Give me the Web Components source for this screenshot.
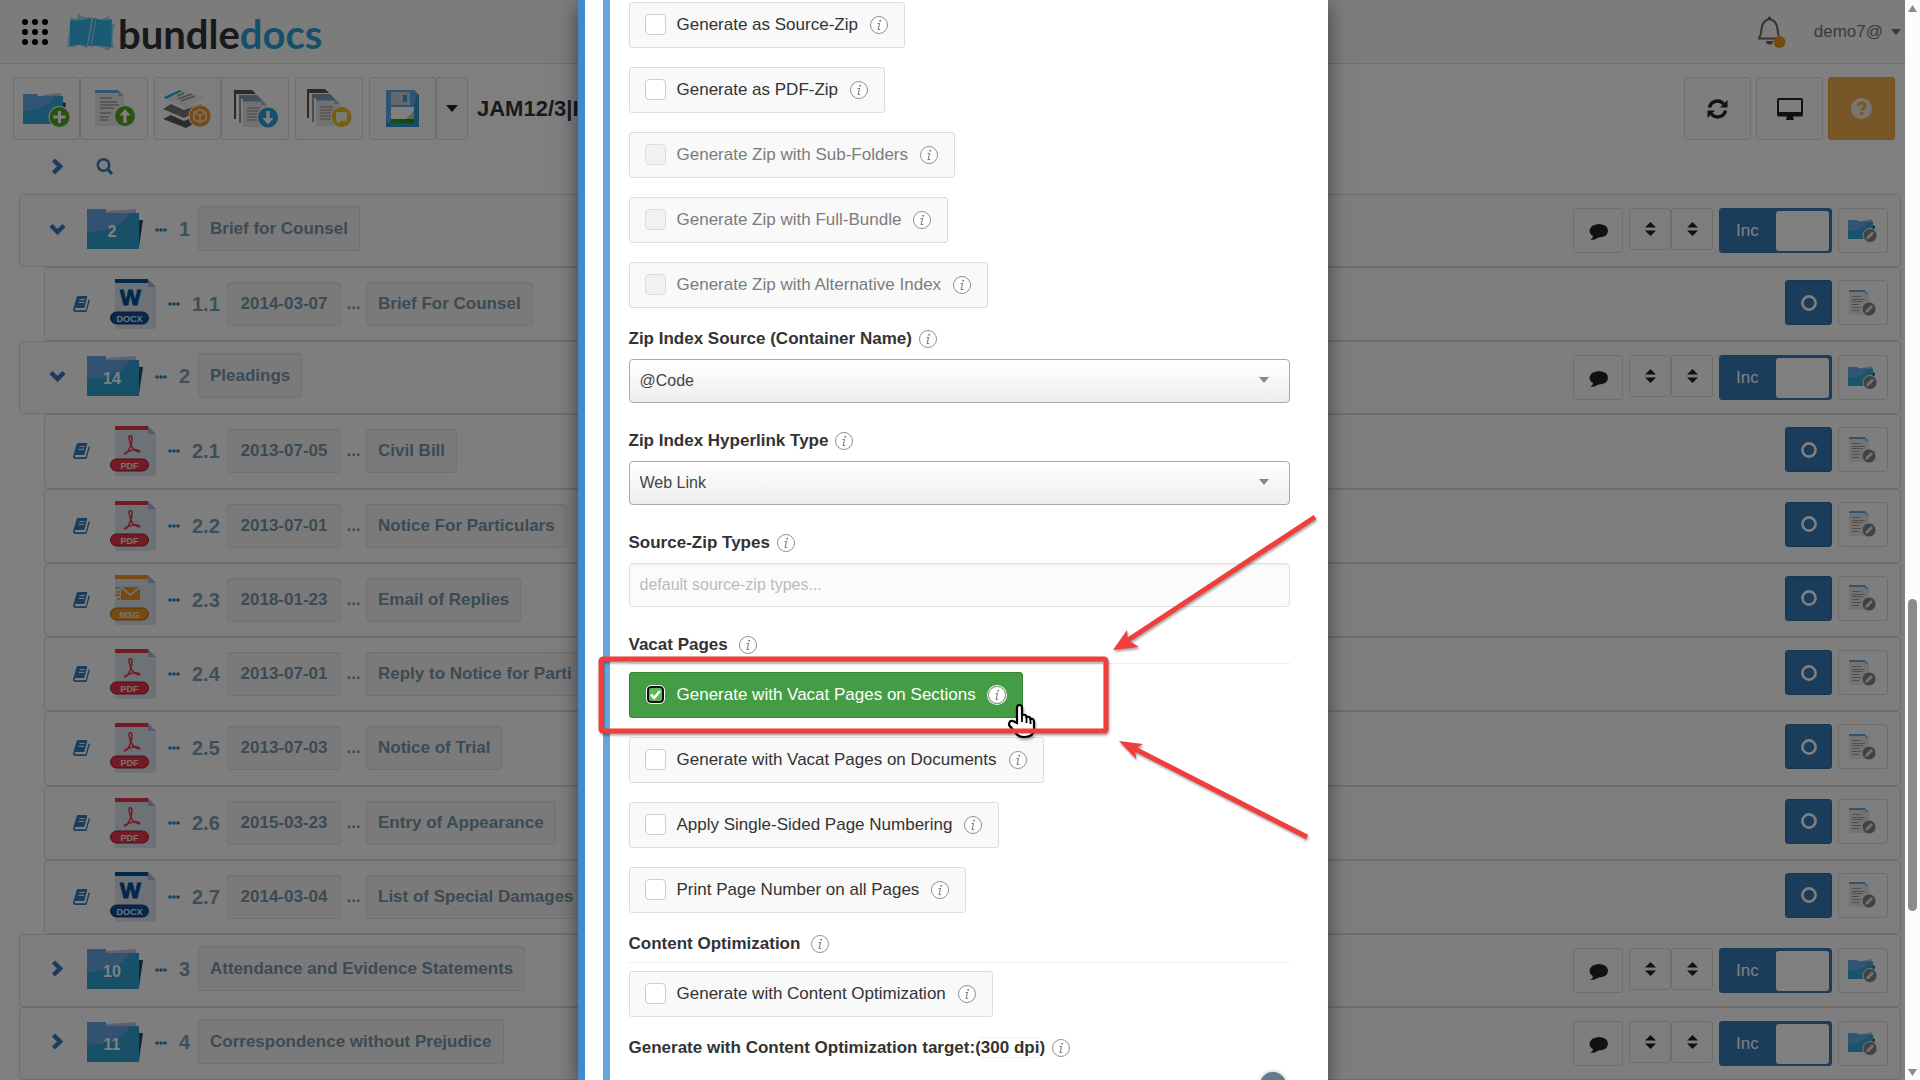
<!DOCTYPE html>
<html lang="en">
<head>
<meta charset="utf-8">
<title>Bundledocs</title>
<style>
html, body { height: 100%; }
body { margin: 0; overflow: hidden; font-family: "Liberation Sans", Arial, sans-serif; font-size: 17px; line-height: 24px; color: #333; background: #fff; }
</style>
</head>
<body>
<bd-app>
  <bd-header user="demo7@"></bd-header>
  <bd-toolbar>JAM12/3|I</bd-toolbar>
  <bd-tree>
    <bd-section num="1" count="2" open>Brief for Counsel</bd-section>
    <bd-document num="1.1" type="docx" date="2014-03-07">Brief For Counsel</bd-document>
    <bd-section num="2" count="14" open>Pleadings</bd-section>
    <bd-document num="2.1" type="pdf" date="2013-07-05">Civil Bill</bd-document>
    <bd-document num="2.2" type="pdf" date="2013-07-01">Notice For Particulars</bd-document>
    <bd-document num="2.3" type="msg" date="2018-01-23">Email of Replies</bd-document>
    <bd-document num="2.4" type="pdf" date="2013-07-01">Reply to Notice for Parti</bd-document>
    <bd-document num="2.5" type="pdf" date="2013-07-03">Notice of Trial</bd-document>
    <bd-document num="2.6" type="pdf" date="2015-03-23">Entry of Appearance</bd-document>
    <bd-document num="2.7" type="docx" date="2014-03-04">List of Special Damages</bd-document>
    <bd-section num="3" count="10">Attendance and Evidence Statements</bd-section>
    <bd-section num="4" count="11">Correspondence without Prejudice</bd-section>
  </bd-tree>
  <bd-modal slot="modal">
    <bd-option>Generate as Source-Zip</bd-option>
    <bd-option>Generate as PDF-Zip</bd-option>
    <bd-option disabled>Generate Zip with Sub-Folders</bd-option>
    <bd-option disabled>Generate Zip with Full-Bundle</bd-option>
    <bd-option disabled>Generate Zip with Alternative Index</bd-option>
    <bd-field kind="select" value="@Code">Zip Index Source (Container Name)</bd-field>
    <bd-field kind="select" value="Web Link">Zip Index Hyperlink Type</bd-field>
    <bd-field kind="text" value="default source-zip types...">Source-Zip Types</bd-field>
    <bd-heading>Vacat Pages</bd-heading>
    <bd-option checked>Generate with Vacat Pages on Sections</bd-option>
    <bd-option>Generate with Vacat Pages on Documents</bd-option>
    <bd-option>Apply Single-Sided Page Numbering</bd-option>
    <bd-option>Print Page Number on all Pages</bd-option>
    <bd-heading>Content Optimization</bd-heading>
    <bd-option>Generate with Content Optimization</bd-option>
    <bd-slider value="300 dpi">Generate with Content Optimization target:</bd-slider>
    <bd-annotations slot="overlay"></bd-annotations>
  </bd-modal>
</bd-app>

<script>
const badge = (x, y, r, fill, inner) =>
  `<circle cx="${x}" cy="${y}" r="${r + 1}" fill="#f4f4f4"/><circle cx="${x}" cy="${y}" r="${r}" fill="${fill}"/>${inner}`;

const pageStack = (dx, dy) => `<g transform="translate(${dx} ${dy})">
  <path d="M12 42V13H30L34 17H14V42Z" fill="#555"/><path d="M17 46V18H35L39 22H19V46Z" fill="#999"/>
  <path d="M21 22H39L45 28V50H21Z" fill="#e2e2e2"/><path d="M39 22V28H45Z" fill="#bbb"/><path d="M21 22H39V24.500H21Z" fill="#5aa9e6"/>
  <path d="M25 31H38M25 34H40M25 37H36M25 40H38M25 43H36" stroke="#a8a8a8" stroke-width="1.500"/></g>`;

const fileIcon = (color, dark, glyph, label) => `
  <path d="M5 0H38L46 8V48Q46 50 44 50H7Q5 50 5 48Z" fill="#dbe5ee"/><path d="M38 0V8H46Z" fill="#b3b1dc"/>
  <path d="M5 0H38V4H5Z" fill="${color}"/>${glyph}
  <rect x=".500" y="33" width="38" height="12" rx="6" fill="${color}" stroke="${dark}"/>
  <text x="19.500" y="42.500" text-anchor="middle" font-family="Liberation Sans, Arial, sans-serif" font-weight="700" font-size="9" fill="#e9e9f2">${label}</text>`;

const pencil = (x, y) => `<circle cx="${x}" cy="${y}" r="7" fill="#858585" stroke="#f4f4f4"/><path d="M${x - 4} ${y + 4}L${x - 3} ${y + 1}L${x + 2} ${y - 4}L${x + 4} ${y - 2}L${x - 1} ${y + 3}Z" fill="#e8e8e8"/>`;

const ICONS = {
  dots: [26, 26, [3, 13, 23].map(y => [3, 13, 23].map(x => `<circle cx="${x}" cy="${y}" r="3"/>`).join('')).join('')],
  brand: [48, 38, `<g fill="#35b5e5"><path d="M4 4Q14 10 23 4L20 36Q10 28 0 35Z" opacity=".5"/><path d="M11 0Q17 6 24 4L20 34Q12 28 6 36Z" opacity=".5"/><path d="M3 7Q12 9 25 5L21 33Q10 30 3 34Z"/>
    <path d="M27 5Q35 8 42 3L47 36Q36 30 23 34Z" opacity=".5"/><path d="M28 4Q38 14 48 11L42 38Q32 32 21 33Z" opacity=".5"/><path d="M26 5Q36 9 45 6L44 34Q32 31 21 33Z"/></g><path d="M25.500 4L20 34M29 5L24 34" stroke="#a9dcf2" stroke-width="1"/>`],
  bell: [28, 32, `<path d="M11.500 3Q4.500 4.500 3.500 13Q3.500 18 1 22.500H22Q19.500 18 19.500 13Q18.500 4.500 11.500 3Z" fill="none" stroke="#666" stroke-width="2"/><path d="M10 1.500Q11.500-.500 13 1.500V3H10ZM8 25H15Q15 28.500 11.500 28.500Q8 28.500 8 25Z" fill="#666"/><circle cx="21.500" cy="26" r="6" fill="#f0941e"/>`],
  caret: [10, 6, `<path d="M0 0H10L5 6Z" fill="currentColor"/>`],
  caretBig: [12, 7, `<path d="M0 0H12L6 7Z" fill="#222"/>`],
  newFolder: [65, 61, `<g transform="translate(-1 -1)"><path d="M30 18L48 16V22H30Z" fill="#c6bfe4"/><path d="M48 25L53 26L50 44Z" fill="#27495f"/><path d="M10 17H24L25 19H50V47H10Z" fill="#33a6d8"/><path d="M10 17H24L25 19H42Q36 32 10 34Z" fill="#65aae8"/>${badge(46.5, 40, 10, '#55a624', '<path d="M46.500 34V46M40.500 40H52.500" stroke="#fff" stroke-width="3"/>')}</g>`],
  upload: [65, 61, `<g transform="translate(-1 -1)"><path d="M14 13H37L43 19V49H14Z" fill="#e6e6e6"/><path d="M37 13V19H43Z" fill="#bbb"/><path d="M14 13H37V16H14Z" fill="#5aa9e6"/><path d="M19 21H31M19 25H36M19 28H38M19 31H33M19 36H30M19 40H28M19 43H27" stroke="#a0a0a0" stroke-width="1.500"/>${badge(44, 39, 10, '#55a624', '<path d="M44 32L38.500 38.500H42.300V46H45.700V38.500H49.500Z" fill="#fff"/>')}</g>`],
  layers: [65, 61, `<g transform="translate(-1 -1)"><path d="M9 42L17 38L30 44L45 38V44L32 51Z" fill="#585858"/><path d="M9 32L17 27L30 33L47 27V33L30 41Z" fill="#777"/><path d="M10 21L26 13L50 20L32 31Z" fill="#ededed"/><path d="M10 20L26 13L28 14L12 22Z" fill="#23a4dc"/><path d="M23 19L30 16M24 22L38 17M27 24L41 19" stroke="#999" stroke-width="1.500"/>${badge(46, 39, 10.5, '#f0941e', '<path d="M46 32.500L52 35.500V42.500L46 45.500L40 42.500V35.500ZM40 35.500L46 38.500L52 35.500M46 38.500V45.500" fill="none" stroke="#f6e3c8" stroke-width="1.500"/>')}</g>`],
  download: [65, 61, `<g transform="translate(-1 -1)">${pageStack(0, 0)}${badge(46, 40.5, 10, '#2b9fd3', '<path d="M46 47.500L40.500 41H44.300V34H47.700V41H51.500Z" fill="#fff"/>')}</g>`],
  comment: [65, 61, `<g transform="translate(-1 -1)">${pageStack(-1, -1)}${badge(45.5, 40, 10, '#eebb1c', '<path d="M40 35H51V44H45L41 47V44H40Z" fill="#fbf3d8"/>')}</g>`],
  floppy: [65, 61, `<g transform="translate(-1 -1)"><path d="M17 13H45L50 18V50H17Z" fill="#2f97cd"/><path d="M17 13H45L48 16Q47 34 28 45H17Z" fill="#5ca9ea"/><rect x="22" y="15" width="19" height="13" fill="#c9ced3"/><rect x="34" y="18" width="4" height="7" fill="#4a97dc"/><rect x="22" y="30" width="23" height="12" fill="#fff"/><path d="M22 42H45V46H22Z" fill="#2fa016"/><path d="M45 33Q40 41 30 46H45Z" fill="#1f7a10" opacity=".35"/></g>`],
  chevRight: [12, 17, `<path d="M2.500 2L9 8.500L2.500 15" fill="none" stroke="#337ab7" stroke-width="4.500"/>`],
  chevDown: [17, 12, `<path d="M2 2.500L8.500 9L15 2.500" fill="none" stroke="#337ab7" stroke-width="4.500"/>`],
  search: [17, 17, `<circle cx="7.500" cy="7" r="5.700" fill="none" stroke="#337ab7" stroke-width="2.500"/><path d="M11.500 11L16 16" stroke="#337ab7" stroke-width="3"/>`],
  refresh: [21, 20, `<g fill="none" stroke="#222" stroke-width="3.500"><path d="M2.500 8.500A8 8 0 0 1 16.500 5"/><path d="M18.500 11.500A8 8 0 0 1 4.500 15"/></g><path d="M20.500 1V8.500H13ZM.500 19V11.500H8Z" fill="#222"/>`],
  monitor: [26, 22, `<path d="M2 0H24Q26 0 26 2V17Q26 18.500 24 18.500H16L17 22H9L10 18.500H2Q0 18.500 0 17V2Q0 0 2 0ZM2 2V14H24V2Z" fill="#222" fill-rule="evenodd"/>`],
  help: [21, 21, `<circle cx="10.500" cy="10.500" r="10.500" fill="#f3ece2"/><path d="M7.300 8.200Q7.500 5 10.700 5Q14 5 14 7.800Q14 9.500 12 10.500Q10.800 11.200 10.700 12.800" fill="none" stroke="#f0ad4e" stroke-width="2.800"/><rect x="9.200" y="14" width="3" height="3" fill="#f0ad4e"/>`],
  more: [12, 4, `<g fill="#2b84b8"><circle cx="2" cy="2" r="1.800"/><circle cx="6" cy="2" r="1.800"/><circle cx="10" cy="2" r="1.800"/></g>`],
  bookmark: [17, 16, `<path d="M5 0H13.500Q14.500 0 14.200 1L11.300 12H2.700Q1.800 12 1.800 13.200Q1.800 14.200 2.700 14.200H12.700L15.600 3.200Q17 3.500 16.700 4.800L13.800 15Q13.500 16 12.500 16H2.500Q-.500 16 .200 12.800L3.600 1.200Q4 0 5 0Z" fill="#337ab7"/><path d="M6.500 3.500H12M5.700 6.300H11.200" stroke="#e4ecf4" stroke-width="1.200"/>`],
  bubble: [19, 16, `<path d="M10 0Q19 .500 19 7Q18.500 13 9.500 13.500Q6 16 1.500 16Q4 14.500 4 12Q.500 10 .500 7Q1 .500 10 0Z" fill="#222"/>`],
  sort: [11, 14, `<path d="M0 5.500L5.500 0L11 5.500ZM0 8.500L5.500 14L11 8.500Z" fill="#222"/>`],
  ring: [16, 16, `<circle cx="8" cy="8" r="6.600" fill="none" stroke="#fff" stroke-width="2.600"/>`],
  editFolder: [30, 24, `<path d="M14 2L24 0V4H14Z" fill="#c6bfe4"/><path d="M24 6L27 7L25 16Z" fill="#27495f"/><path d="M0 1H9L10 2.500H25V20H0Z" fill="#33a6d8"/><path d="M0 1H9L10 2.500H20Q16 11 0 12Z" fill="#65aae8"/>${pencil(22, 16.5)}`],
  editDoc: [30, 28, `<path d="M1 1H17L21 5V26H1Z" fill="#e6e6e6"/><path d="M17 1V5H21Z" fill="#bbb"/><path d="M1 1H17V3H1Z" fill="#5aa9e6"/><path d="M4 7.500H13M4 10.500H17M4 12.500H15M4 15.500H11M4 18.500H13M4 21.500H11" stroke="#a0a0a0"/>${pencil(21, 20)}`],
  info: [18, 18, `<circle cx="9" cy="9" r="8.500" fill="#fff" stroke="#909090"/><path d="M7.500 7.500H9.500L8.200 13.500H10.200" fill="none" stroke="#808080" stroke-width="1.100"/><circle cx="10.200" cy="4.700" r="1" fill="#808080"/>`],
  pdf: [46, 50, fileIcon('#e8344a', '#a3182c', `<path d="M15 28C19 26 22 18 22 12C22 9 18.500 9 19 12C20 19 23 25 29 26C31 25 27 23 23 24C19 25 16 26 14 28" fill="none" stroke="#e8344a" stroke-width="1.600"/>`, 'PDF')],
  docx: [46, 50, fileIcon('#02509a', '#5a2458', `<text x="20.500" y="26" text-anchor="middle" font-family="Liberation Sans, Arial, sans-serif" font-weight="700" font-size="22" fill="#02509a" stroke="#02509a">W</text>`, 'DOCX')],
  msg: [46, 50, fileIcon('#f0941e', '#b5660a', `<rect x="11" y="12" width="19" height="13" fill="#f0941e"/><path d="M11 12L20.500 20L30 12" fill="none" stroke="#dbe5ee" stroke-width="1.800"/><path d="M5 13H10M6 17H10M5 20H10M7 24H10" stroke="#f0941e" stroke-width="1.500"/>`, 'MSG')]
};

class Base extends HTMLElement {
  connectedCallback() {
    if (this.shadowRoot) return;
    const t = document.createElement('template');
    t.innerHTML = `<style>*{box-sizing:border-box}button{font:inherit;color:inherit;padding:0;margin:0;display:flex;align-items:center;justify-content:center;border:1px solid #ddd;border-radius:3px;background:#fcfcfc}${this.css()}</style>${this.html()}`;
    this.attachShadow({ mode: 'open' }).append(t.content.cloneNode(true));
  }
  a(n) { return this.getAttribute(n) || ''; }
}
const define = (name, css, html) => customElements.define(name, class extends Base {
  css() { return css; }
  html() { return html(this); }
});

customElements.define('bd-icon', class extends Base {
  css() { return ':host{display:block;flex:none}svg{display:block}'; }
  html() {
    const [w, h, body] = ICONS[this.a('name')];
    return `<svg width="${w}" height="${h}" viewBox="0 0 ${w} ${h}" aria-hidden="true">${body}</svg>`;
  }
});

define('bd-scrollbar', `
:host{display:flex;flex-direction:column;align-items:center;width:15px;background:#fcfcfc;padding:5px 0 4px 0}
svg{display:block;flex:none}
.track{flex:1;display:flex;flex-direction:column;padding:8px 0}
.before{flex:578}.thumb{flex:312;width:9px;border-radius:5px;background:#8b8b8b}.after{flex:150}`,
() => `<svg width="9" height="7"><path d="M4.500 0L9 7H0Z" fill="#8b8b8b"/></svg>
<div class="track"><div class="before"></div><div class="thumb"></div><div class="after"></div></div>
<svg width="9" height="7"><path d="M4.500 7L9 0H0Z" fill="#8b8b8b"/></svg>`);

define('bd-app', `
:host{display:flex;height:100vh;overflow:hidden}
.stage{flex:1;min-width:0;position:relative;overflow:hidden}
main{display:flex;flex-direction:column;height:100%}
.backdrop{position:absolute;inset:0;background:rgba(0,0,0,.5);display:flex;justify-content:center}`,
() => `<div class="stage"><main><slot></slot></main><div class="backdrop"><slot name="modal"></slot></div></div><bd-scrollbar></bd-scrollbar>`);

define('bd-header', `
:host{display:flex;align-items:center;height:64px;flex:none;padding:0 4px 0 22px;background:#f8f8f8;border-bottom:1px solid #ddd;box-sizing:border-box}
.apps{border:0;background:none}
.brand{display:flex;align-items:center;margin-left:19px;gap:3px;text-decoration:none;font:700 40px/48px Lato,sans-serif;color:#333}
.brand span{padding-top:4px}
.brand b{font-weight:inherit;color:#2a9fd6}
.right{margin-left:auto;display:flex;align-items:center;gap:28px}
.user{border:0;background:none;color:#777;gap:8px}`,
e => `<button class="apps" aria-label="Apps"><bd-icon name="dots"></bd-icon></button>
<a class="brand" href="#"><bd-icon name="brand"></bd-icon><span>bundle<b>docs</b></span></a>
<div class="right"><bd-icon name="bell"></bd-icon><button class="user">${e.a('user')}<bd-icon name="caret"></bd-icon></button></div>`);

define('bd-toolbar', `
:host{display:block;flex:none}
.bar{display:flex;align-items:center;padding:13px 10px 0 13px}
.group{display:flex;margin-right:6px}
.bar button{width:67px;height:63px}
.group button+button{width:68px}
.group button.drop{width:32px}
.wide button{width:68px}
h1{margin:0 0 0 3px;font-size:22px;line-height:28px;color:#333;white-space:nowrap}
.right{margin-left:auto;display:flex;gap:5px}
.right .help{background:#f0ad4e;border-color:#eea236}
.find{display:flex;align-items:center;height:54px;padding:0 0 2px 51px;gap:33px}
.find button{border:0;background:none}`,
() => `<div class="bar">
<div class="group"><button aria-label="New section"><bd-icon name="newFolder"></bd-icon></button><button aria-label="Upload"><bd-icon name="upload"></bd-icon></button></div>
<div class="group"><button aria-label="Generate"><bd-icon name="layers"></bd-icon></button><button aria-label="Download"><bd-icon name="download"></bd-icon></button></div>
<div class="group wide"><button aria-label="Comments"><bd-icon name="comment"></bd-icon></button></div>
<div class="group"><button aria-label="Save"><bd-icon name="floppy"></bd-icon></button><button class="drop" aria-label="More"><bd-icon name="caretBig"></bd-icon></button></div>
<h1><slot></slot></h1>
<div class="right"><button aria-label="Refresh"><bd-icon name="refresh"></bd-icon></button><button aria-label="Screen"><bd-icon name="monitor"></bd-icon></button><button class="help" aria-label="Help"><bd-icon name="help"></bd-icon></button></div>
</div>
<div class="find"><button aria-label="Expand"><bd-icon name="chevRight"></bd-icon></button><button aria-label="Search"><bd-icon name="search"></bd-icon></button></div>`);

define('bd-tree', `:host{flex:1;min-height:0;display:flex;flex-direction:column;padding:0 4px 0 19px}`, () => `<slot></slot>`);

const rowCss = `
:host{display:flex;align-items:center;justify-content:space-between;border:1px solid #ddd;border-radius:4px;background:#fdfdfd;box-sizing:border-box;padding-right:12px;white-space:nowrap}
.left,.right{display:flex;align-items:center}
.left{color:#7796ab;font-weight:700}
.num{font-size:20px;color:#7d9eb5}
.chip{display:flex;align-items:center;height:45px;padding:0 11px;border:1px solid #e2e2e2;border-radius:3px;background:#f5f5f5;box-shadow:inset 0 1px 1px rgba(0,0,0,.05)}
.right button{width:50px;height:45px}`;

define('bd-section', rowCss + `
:host{flex:0 0 73px}
.left{padding:0 0 4px 24px}
.toggle{width:26px;border:0;background:none;margin-right:17px}
.folder{display:block}
.left>bd-icon{margin:3px 12px 0 12px}
.num{width:19px}
.right{align-items:flex-start}
.right .sort{width:42px;height:42px}
.right .sort+.sort{margin-right:6px}
.right .note{margin-right:6px;padding-top:2px}
.right .inc{width:113px;margin-right:6px;background:#337ab7;border-color:#337ab7;color:#fff;justify-content:space-between;padding:1px 2px 1px 16px}
.knob{width:53px;height:40px;background:#fff;border-radius:3px}`,
e => `<div class="left"><button class="toggle" aria-label="Toggle"><bd-icon name="${e.hasAttribute('open') ? 'chevDown' : 'chevRight'}"></bd-icon></button>
<svg class="folder" width="56" height="40" viewBox="0 0 56 40"><path d="M19 2L49 0V8H19Z" fill="#c6bfe4"/><path d="M51 11H56L52 38Z" fill="#2a4a60"/><path d="M0 0H19V4H52V40H0Z" fill="#30a0d0"/><path d="M0 0H19V4H43Q34 22 0 23Z" fill="#64a4e2"/><text x="25" y="28" text-anchor="middle" font-family="Liberation Sans, Arial, sans-serif" font-weight="700" font-size="16" fill="#fff">${e.a('count')}</text></svg>
<bd-icon name="more"></bd-icon><span class="num">${e.a('num')}</span><span class="chip"><slot></slot></span></div>
<div class="right"><button class="note" aria-label="Comment"><bd-icon name="bubble"></bd-icon></button><button class="sort" aria-label="Sort"><bd-icon name="sort"></bd-icon></button><button class="sort" aria-label="Sort"><bd-icon name="sort"></bd-icon></button><button class="inc">Inc<span class="knob"></span></button><button aria-label="Edit"><bd-icon name="editFolder"></bd-icon></button></div>`);

define('bd-document', rowCss + `
:host{flex:1 1 74px;margin-left:25px}
.left{padding-left:28px}
.left .file{margin:0 12px 0 20px}
.num{width:35px;margin-left:12px}
.chip{height:44px}
.date{min-width:114px;justify-content:center}
.gap{width:25px;text-align:center}
.right{padding-bottom:3px}
.right .state{width:47px;margin-right:6px;background:#337ab7;border-color:#2e6da4}`,
e => `<div class="left"><bd-icon name="bookmark"></bd-icon><bd-icon class="file" name="${e.a('type')}"></bd-icon><bd-icon name="more"></bd-icon><span class="num">${e.a('num')}</span><span class="chip date">${e.a('date')}</span><span class="gap">...</span><span class="chip"><slot></slot></span></div>
<div class="right"><button class="state" aria-label="Included"><bd-icon name="ring"></bd-icon></button><button aria-label="Edit"><bd-icon name="editDoc"></bd-icon></button></div>`);

define('bd-modal', `
:host{display:block;position:relative;width:750px;height:100%;background:#fff;border-left:7px solid #428bca;padding-left:18px;box-sizing:border-box;box-shadow:0 6px 19px rgba(0,0,0,.5)}
.body{height:100%;overflow:hidden;border-left:7px solid #67a5da;padding:2px 38px 0 19px}`,
() => `<div class="body"><slot></slot></div><slot name="overlay"></slot>`);

define('bd-option', `
:host{display:flex;margin-bottom:19px}
label{display:flex;align-items:center;gap:11px;height:46px;padding:0 16px 0 15px;border:1px solid #ddd;border-radius:3px;background:#f9f9f9;white-space:nowrap}
input{appearance:none;flex:none;margin:0 0 2px;width:21px;height:21px;border:1px solid #ccc;border-radius:4px;background:#fff}
:host([disabled]) label{color:#7c7c7c}
:host([disabled]) input{background:#f1f1f1;border-color:#ddd}
:host([checked]) label{background:#449d44;border-color:#398439;color:#fff}
:host([checked]) input{width:17px;height:17px;margin:0 2px 2px;border:2px solid #101010;outline:1px solid #fff;background:#5cb85c url("data:image/svg+xml,%3Csvg xmlns='http://www.w3.org/2000/svg' viewBox='0 0 13 13'%3E%3Cpath d='M2 6.500L5.200 9.800L11 3' fill='none' stroke='white' stroke-width='2.600'/%3E%3C/svg%3E") center/13px no-repeat}
:host([checked]) bd-icon{border-radius:50%;box-shadow:0 0 0 1px #fff}
bd-icon{margin:0 0 1px 1px}`,
e => `<label><input type="checkbox"${e.hasAttribute('checked') ? ' checked' : ''}${e.hasAttribute('disabled') ? ' disabled' : ''}><span><slot></slot></span><bd-icon name="info"></bd-icon></label>`);

define('bd-field', `
:host{display:block;margin-bottom:26px}
label{display:flex;align-items:center;gap:7px;margin-bottom:8px;font-weight:700}
.wrap{display:grid;align-items:center}
.wrap>*{grid-area:1/1}
select,input{appearance:none;width:100%;height:44px;margin:0;padding:0 10px;font:inherit;font-size:16px;color:#444;border:1px solid #aaa;border-radius:4px;background:linear-gradient(#fff,#eee)}
input{background:#fbfbfb;border-color:#e0e0e0;box-shadow:inset 0 1px 1px rgba(0,0,0,.06)}
input::placeholder{color:#bbb;opacity:1}
.wrap bd-icon{justify-self:end;margin:0 21px 2px 0;color:#888;pointer-events:none}`,
e => `<label for="f"><slot></slot><bd-icon name="info"></bd-icon></label><div class="wrap">${e.a('kind') === 'select'
  ? `<select id="f"><option>${e.a('value')}</option></select><bd-icon name="caret"></bd-icon>`
  : `<input id="f" type="text" placeholder="${e.a('value')}">`}</div>`);

define('bd-heading', `
:host{display:block;margin-bottom:8px;border-bottom:1px solid #eee;padding-bottom:6px}
h2{margin:0;display:flex;align-items:center;gap:11px;font-size:17px;line-height:24px}`,
() => `<h2><slot></slot><bd-icon name="info"></bd-icon></h2>`);

define('bd-slider', `
:host{display:block}
label{display:flex;align-items:center;gap:7px;font-weight:700;white-space:nowrap}
output{outline:1px solid #f0f0f0}
input{appearance:none;display:block;width:100%;height:26px;margin:12px 0 0;padding:0 4px;background:none}
input::-webkit-slider-thumb{appearance:none;width:26px;height:26px;border-radius:50%;background:#5f7d8e;box-shadow:0 0 4px rgba(0,0,0,.3)}`,
e => `<label for="s"><span><slot></slot>(<output for="s">${e.a('value')}</output>)</span><bd-icon name="info"></bd-icon></label><input id="s" type="range" min="0" max="300" value="300">`);

define('bd-annotations', `
:host{position:absolute;left:0;top:500px;width:750px;height:350px;pointer-events:none}
svg{display:block;filter:drop-shadow(1px 2px 1px rgba(0,0,0,.35))}`,
() => `<svg width="750" height="350" viewBox="585 500 750 350" aria-hidden="true">
<path d="M1017 723V708Q1017 705 1019.500 705Q1022 705 1022 708V715Q1026 714 1026.500 717Q1030 716 1030.500 719Q1034 718 1034 722V729Q1034 737 1024 737Q1018 737 1015 732L1009 725Q1009 720 1013 721Z" fill="#fff" stroke="#000" stroke-width="2.200"/><path d="M1022 715V722M1026.500 717V723M1030.500 719V724" stroke="#000" stroke-width="1.800"/>
<rect x="601" y="659" width="505" height="72" rx="2" fill="none" stroke="#f23d3d" stroke-width="5"/>
<g stroke="#f23d3d" stroke-width="5"><path d="M1315 517L1125 642"/><path d="M1307 837L1133 748"/></g>
<g fill="#f23d3d"><path d="M1113 650L1127 630L1128 640L1139 647Z"/><path d="M1119 741L1143 744L1135 749L1136 759Z"/></g></svg>`);
</script>
</body>
</html>
